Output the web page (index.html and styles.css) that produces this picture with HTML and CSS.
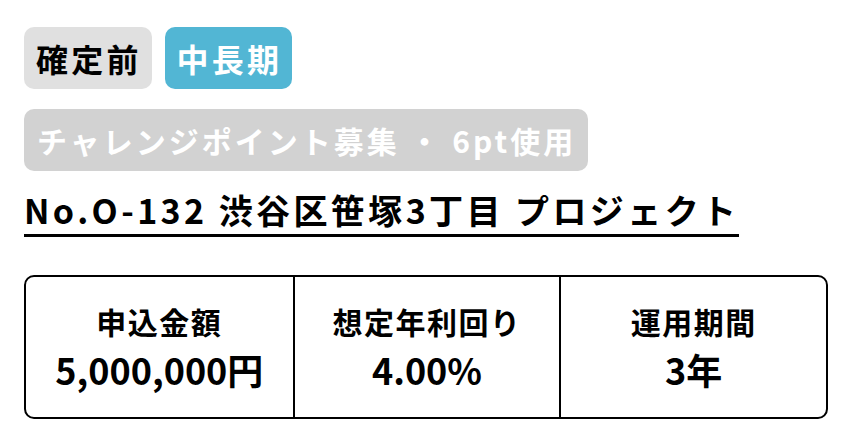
FILE: index.html
```html
<!DOCTYPE html>
<html lang="ja">
<head>
  <meta charset="UTF-8" />
  <meta name="viewport" content="width=device-width, initial-scale=1.0"/>
  <title>No.O-132 渋谷区笹塚3丁目 プロジェクト</title>
  <link rel="stylesheet" href="styles.css">
</head>
<body>

  <div class="project">
    <!-- Status tags -->
    <div class="tags">
      <span class="tag tag-pending">確定前</span>
      <span class="tag tag-term">中長期</span>
    </div>
    <div class="tags">
      <span class="tag tag-point">チャレンジポイント募集 ・ 6pt使用</span>
    </div>

    <!-- Title -->
    <h1 class="project-title">No.O-132 渋谷区笹塚3丁目 プロジェクト</h1>

    <!-- Summary -->
    <div class="summary">
      <div class="summary-item">
        <span class="summary-label">申込金額</span>
        <span class="summary-value">5,000,000円</span>
      </div>
      <div class="summary-item">
        <span class="summary-label">想定年利回り</span>
        <span class="summary-value">4.00%</span>
      </div>
      <div class="summary-item">
        <span class="summary-label">運用期間</span>
        <span class="summary-value">3年</span>
      </div>
    </div>
  </div>

</body>
</html>
```

FILE: styles.css
```css
* { margin: 0; padding: 0; box-sizing: border-box; }
body {
  font-family: "Noto Sans CJK JP", "Noto Sans", sans-serif;
  font-weight: bold;
  color: #000;
  background-color: #fff;
}

.project {
  padding: 27px 28px 27px 24px;
}

.tags {
  display: flex;
  gap: 13px;
  margin-bottom: 20px;
}

.tag {
  display: inline-block;
  font-size: 32px;
  line-height: 46px;
  letter-spacing: 0.1em;
  padding: 8px 10px 8px 12px;
  border-radius: 10px;
}

.tag-pending {
  background-color: #e0e0e0;
  color: #000;
}

.tag-term {
  background-color: #52b6d4;
  color: #fff;
}

.tag-point {
  font-size: 30px;
  line-height: 46px;
  padding: 8px 12px 8px 13px;
  background-color: #d2d2d2;
  color: #fff;
}

.project-title {
  display: inline-block;
  margin-top: -5px;
  font-size: 34px;
  line-height: 48px;
  letter-spacing: 0.1em;
  border-bottom: 3px solid #000;
}

.summary {
  display: grid;
  grid-template-columns: repeat(3, 1fr);
  margin-top: 38px;
  border: 2px solid #000;
  border-radius: 10px;
}

.summary-item {
  display: flex;
  flex-direction: column;
  align-items: center;
  padding: 22px 0;
}

.summary-item + .summary-item {
  border-left: 2px solid #000;
}

.summary-label {
  font-size: 30px;
  line-height: 44px;
  letter-spacing: 0.05em;
}

.summary-value {
  font-size: 36px;
  line-height: 52px;
}
```
